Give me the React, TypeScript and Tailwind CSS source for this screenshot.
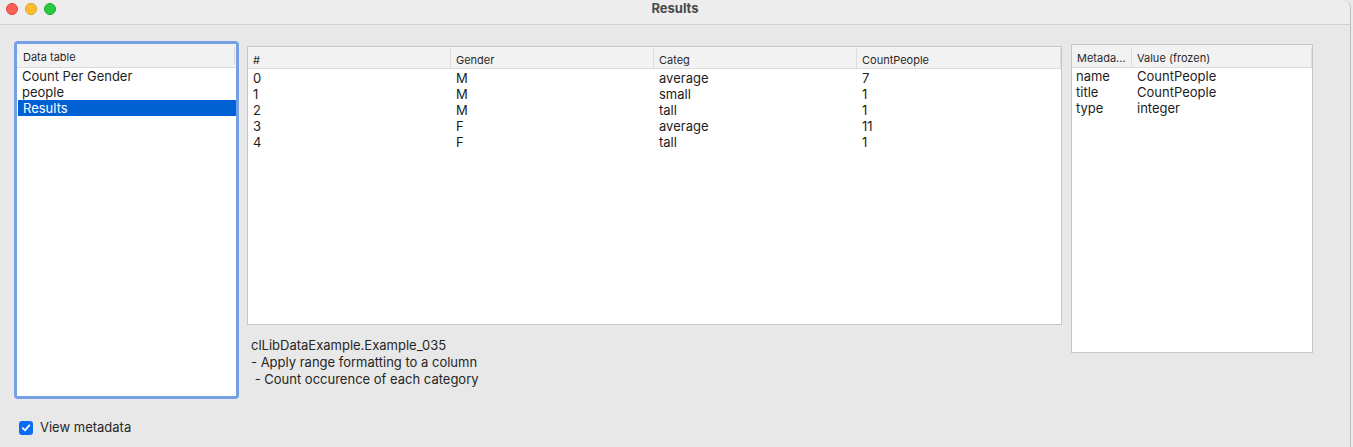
import React from "react";

const font = { fontFamily: 'Inter, "Liberation Sans", Arial, sans-serif' };

function Check() {
  return (
    <div className="w-[14px] h-[14px] rounded-[3px] bg-[#0a6cf0] flex items-center justify-center">
      <svg width="10" height="10" viewBox="0 0 10 10">
        <path d="M1.8 5.2 L4 7.4 L8.3 2.4" fill="none" stroke="white" strokeWidth="1.8" strokeLinecap="round" strokeLinejoin="round" />
      </svg>
    </div>
  );
}

const rows = [
  ["0", "M", "average", "7"],
  ["1", "M", "small", "1"],
  ["2", "M", "tall", "1"],
  ["3", "F", "average", "11"],
  ["4", "F", "tall", "1"],
];

export default function App() {
  return (
    <div className="w-[1353px] h-[447px] bg-[#ebebeb] overflow-hidden text-[#1d1d1d]" style={font}>
      <div className="w-[1351px] h-[447px] flex flex-col bg-[#e8e8e8] border-r border-[#bdbdbd] rounded-tr-[8px]">
        {/* Title bar */}
        <div className="h-[25px] flex-none relative flex items-center justify-center bg-[#ededed] border-b border-[#d0d0d0] rounded-tr-[8px]">
          <div className="absolute left-[6px] top-[3px] flex gap-[7px]">
            <div className="w-[12px] h-[12px] rounded-full bg-[#fe5f57] border border-[#e0443e]" />
            <div className="w-[12px] h-[12px] rounded-full bg-[#febc2e] border border-[#dea123]" />
            <div className="w-[12px] h-[12px] rounded-full bg-[#28c840] border border-[#1aab29]" />
          </div>
          <span className="text-[13px] font-bold text-[#4a4a4a] -mt-[6px]">Results</span>
        </div>

        {/* Body */}
        <div className="flex-1 flex flex-row items-start pl-[14px]">
          {/* Left column */}
          <div className="flex flex-col mt-[16px]">
            <div className="w-[225px] h-[358px] rounded-[4px] bg-[#76a0e6] p-[3px]">
              <div className="w-full h-full bg-white flex flex-col">
                <div className="h-[24px] bg-[#f2f2f2] border-b border-[#dcdcdc] flex items-center pl-[6px] pt-[3px] text-[11px] text-[#2a2a2a] relative">
                  Data table
                  <div className="absolute right-[1px] top-[3px] w-px h-[16px] bg-[#d8d8d8]" />
                </div>
                <div className="text-[13px] leading-[16px]">
                  <div className="pl-[5px] h-[16px]">Count Per Gender</div>
                  <div className="pl-[5px] h-[16px]">people</div>
                  <div className="pl-[5px] h-[16px] bg-[#0061d4] text-white ml-[1px]">Results</div>
                </div>
              </div>
            </div>
            <div className="flex items-center gap-[7px] mt-[19px] pl-[5px]">
              <Check />
              <span className="text-[13px] text-[#262626]">View metadata</span>
            </div>
          </div>

          {/* Middle column */}
          <div className="flex flex-col ml-[8px] mt-[21px]">
            <div className="w-[815px] h-[279px] bg-white border border-[#c6c6c6] flex flex-col">
              <div className="h-[22px] bg-[#f2f2f2] border-b border-[#dcdcdc] grid grid-cols-[203px_203px_203px_1fr] text-[11px] text-[#2a2a2a]">
                <div className="flex items-center pl-[5px] pt-[3px] border-r border-[#dcdcdc] my-[2px]">#</div>
                <div className="flex items-center pl-[5px] pt-[3px] border-r border-[#dcdcdc] my-[2px]">Gender</div>
                <div className="flex items-center pl-[5px] pt-[3px] border-r border-[#dcdcdc] my-[2px]">Categ</div>
                <div className="flex items-center pl-[5px] pt-[3px] border-r border-[#dcdcdc] my-[2px]">CountPeople</div>
              </div>
              <div className="text-[13px] leading-[16px] pt-[1px]">
                {rows.map((r) => (
                  <div key={r[0]} className="grid grid-cols-[203px_203px_203px_1fr] h-[16px]">
                    {r.map((c, i) => (
                      <div key={i} className="pl-[5px]">{c}</div>
                    ))}
                  </div>
                ))}
              </div>
            </div>
            <div className="mt-[12px] pl-[4px] text-[13px] leading-[17px] text-[#262626] whitespace-pre">
              <div>clLibDataExample.Example_035</div>
              <div>- Apply range formatting to a column</div>
              <div> - Count occurence of each category</div>
            </div>
          </div>

          {/* Right column */}
          <div className="ml-[9px] mt-[19px] w-[242px] h-[309px] bg-white border border-[#c6c6c6] flex flex-col">
            <div className="h-[23px] bg-[#f2f2f2] border-b border-[#dcdcdc] grid grid-cols-[60px_1fr] text-[11px] text-[#2a2a2a]">
              <div className="flex items-center pl-[5px] pt-[2px] border-r border-[#dcdcdc] my-[3px]">Metada...</div>
              <div className="flex items-center pl-[5px] pt-[2px] border-r border-[#dcdcdc] my-[3px]">Value (frozen)</div>
            </div>
            <div className="text-[13px] leading-[16px]">
              {[["name", "CountPeople"], ["title", "CountPeople"], ["type", "integer"]].map((r) => (
                <div key={r[0]} className="grid grid-cols-[60px_1fr] h-[16px]">
                  <div className="pl-[4px]">{r[0]}</div>
                  <div className="pl-[5px]">{r[1]}</div>
                </div>
              ))}
            </div>
          </div>
        </div>
      </div>
    </div>
  );
}
